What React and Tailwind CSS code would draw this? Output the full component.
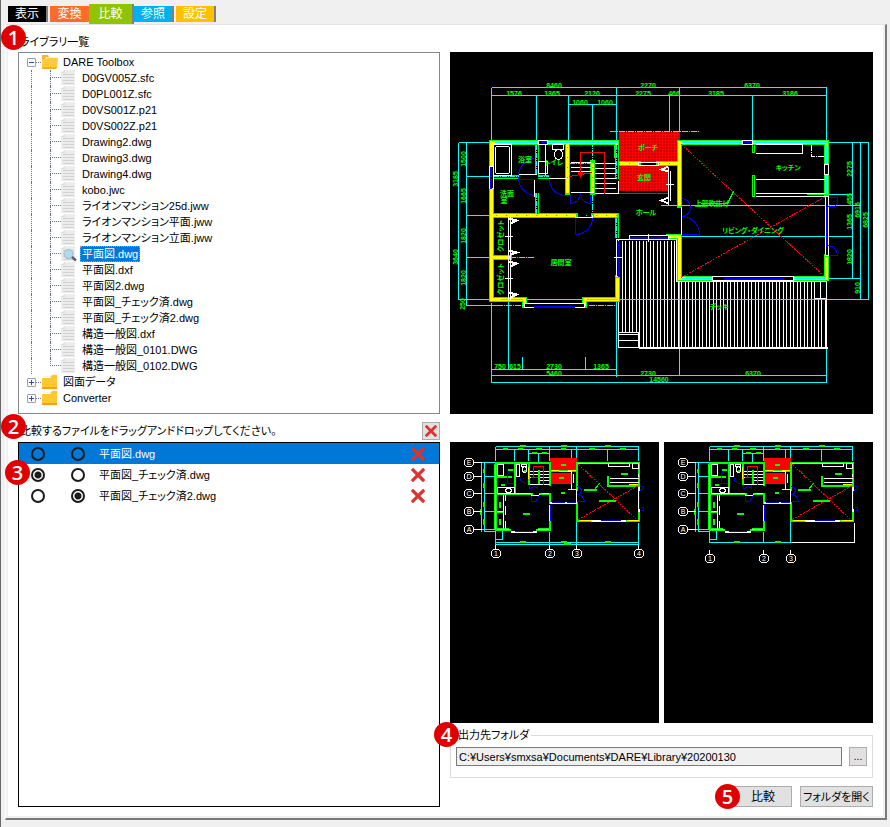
import { useState } from 'react';

const TABS = [
  { label: '表示', style: 'mr-[2px] mb-[2px] h-4 w-10 border-r-2 bg-black' },
  { label: '変換', style: 'mb-[2px] h-4 w-[39px] bg-[#ff6b2c]' },
  { label: '比較', style: 'h-5 w-[45px] border-r-2 bg-[#8fc400]' },
  { label: '参照', style: 'mr-[2px] mb-[2px] h-4 w-10 border-r-2 bg-[#00b0f0]' },
  { label: '設定', style: 'mb-[2px] h-4 w-10 border-r-2 bg-[#ffc000]' },
];

const FILES = [
  'D0GV005Z.sfc',
  'D0PL001Z.sfc',
  'D0VS001Z.p21',
  'D0VS002Z.p21',
  'Drawing2.dwg',
  'Drawing3.dwg',
  'Drawing4.dwg',
  'kobo.jwc',
  'ライオンマンション25d.jww',
  'ライオンマンション平面.jww',
  'ライオンマンション立面.jww',
  '平面図.dwg',
  '平面図.dxf',
  '平面図2.dwg',
  '平面図_チェック済.dwg',
  '平面図_チェック済2.dwg',
  '構造一般図.dxf',
  '構造一般図_0101.DWG',
  '構造一般図_0102.DWG',
];

const TARGETS = ['平面図.dwg', '平面図_チェック済.dwg', '平面図_チェック済2.dwg'];

function Badge({ n, className }) {
  return (
    <span
      className={`absolute z-10 flex size-[25px] items-center justify-center rounded-full bg-[#e00000] font-['Open_Sans',sans-serif] text-[20px] leading-none font-semibold text-white ${className}`}
    >
      {n}
    </span>
  );
}

function FolderIcon({ open }) {
  return (
    <svg viewBox="0 0 17 16" className="h-4 w-[17px] shrink-0">
      {open ? (
        <>
          <path d="M1 3V1h6l1 2h7v4H1z" fill="#fbb03b" />
          <path d="M5 3h10v4H3z" fill="#fff3d0" />
          <path d="M1 5h4l2-1h10l-1 10H1z" fill="#ffc93c" />
          <path d="M1 13h14.500v2H1z" fill="#fbab30" />
        </>
      ) : (
        <>
          <path d="M2 2h8l2-2h3v3H2z" fill="#fff3d0" />
          <path d="M1 4h8l2-3h5v14H1z" fill="#ffc832" />
          <path d="M1 13h15v2H1z" fill="#ff9a26" />
        </>
      )}
    </svg>
  );
}

function FileIcon({ active }) {
  return (
    <svg viewBox="0 0 16 16" className="size-4 shrink-0">
      <path d="M4 0h10v15H0V3z" fill="#ececec" />
      <path d="M4 0v3H0z" fill="#dcdcdc" />
      <path d="M2 4.5h11M2 7.5h11M2 10.5h11M2 13.5h11" stroke="#d2d2d2" />
      {active && (
        <>
          <circle cx="7.5" cy="8" r="4.5" fill="#a9dcf7" stroke="#b4c0c8" strokeWidth="1.4" />
          <path d="M11 11l4 3.5" stroke="#5c6066" strokeWidth="2.4" />
        </>
      )}
    </svg>
  );
}

function Cross({ className }) {
  return (
    <svg viewBox="0 0 14 14" className={className}>
      <path d="M2 2l10 10M12 2L2 12" stroke="#d9342f" strokeWidth="3.2" strokeLinecap="square" fill="none" />
    </svg>
  );
}

function Toggle({ open, label }) {
  return (
    <button
      aria-label={label}
      className="flex size-[9px] shrink-0 items-center justify-center rounded-[1px] border border-gray-400 bg-gray-50"
    >
      <svg viewBox="0 0 7 7" className="size-[7px] shrink-0" shapeRendering="crispEdges">
        <path d={open ? 'M1 3.5h5' : 'M1 3.5h5M3.5 1v5'} stroke="#2a4fb0" />
      </svg>
    </button>
  );
}

function FolderRow({ name, open }) {
  return (
    <div className="flex h-4 items-center pl-2">
      <Toggle open={open} label={name} />
      <span className="w-[5px] border-b border-dotted border-gray-500" />
      <FolderIcon open={open} />
      <span className="ml-[5px]">{name}</span>
    </div>
  );
}

function FileRow({ name, last, active, onSelect }) {
  return (
    <li className="flex h-4 items-center pl-3">
      <span className="w-[19px] self-stretch border-l border-dotted border-gray-500" />
      <span className="flex w-[11px] flex-col self-stretch">
        <span className="h-2 border-b border-l border-dotted border-gray-500" />
        {!last && <span className="h-2 border-l border-dotted border-gray-500" />}
      </span>
      <FileIcon active={active} />
      <button
        onClick={onSelect}
        className={`ml-[3px] h-4 px-[2px] whitespace-nowrap ${
          active ? 'bg-[#0078d7] text-white outline-1 -outline-offset-1 outline-[#ff8728] outline-dotted' : ''
        }`}
      >
        {name}
      </button>
    </li>
  );
}

function Radio({ name, label, defaultChecked }) {
  return (
    <input
      type="radio"
      name={name}
      aria-label={label}
      defaultChecked={defaultChecked}
      className="size-[14px] shrink-0 appearance-none rounded-full border-2 border-[#1c1c1c] checked:bg-[radial-gradient(circle,#1c1c1c_3px,#fff_4px)]"
    />
  );
}

// [x, y, text]
const DIMS = [
  [554, 88, '8460'], [648, 88, '2270'], [752, 88, '6370'],
  [514, 96, '1576'], [552, 96, '1365'], [592, 96, '2120'], [643, 96, '2275'],
  [674, 96, '466'], [716, 96, '3185'], [790, 96, '3186'],
  [580, 105, '1060'], [605, 105, '1060'],
  [500, 369, '750'], [515, 369, '615'], [554, 369, '2730'], [601, 369, '1365'],
  [554, 376, '5460'], [648, 376, '2730'], [753, 376, '6370'], [659, 382, '14560'],
];

const SIDE_DIMS = [
  [456, 179, '3185'], [464, 159, '1500'], [464, 196, '1665'],
  [456, 257, '3640'], [464, 236, '1820'], [464, 278, '1820'], [463, 304, '250'],
  [850, 169, '2275'], [850, 199, '455'], [850, 222, '1365'], [850, 257, '1820'],
  [858, 210, '6916'], [866, 220, '6825'], [858, 288, '910'],
];

const WALLS =
  'M524 305V299H491V142H616V155M491 215H575M593 215H616M567 142V192M592 162V192M491 257H509' +
  'M584 305V299H617V277M618 163H638M658 163H679M679 205V142H826V194M668 236H679V278H712M793 278H826V256';

const THIN_WALLS = 'M493 176H518M537 176H548M536 144V174M536 192V213M616 144V178M616 217V237';

function FloorPlan() {
  const deck = Array.from({ length: 60 }, (_, i) => 618 + Math.round(i * 3.5));
  return (
    <svg
      viewBox="450 52 423 362"
      className="block h-auto w-full bg-black"
      shapeRendering="crispEdges"
      role="img"
      aria-label="平面図.dwg"
    >
      <defs>
        <pattern id="dots" width="3" height="3" patternUnits="userSpaceOnUse">
          <rect width="3" height="3" fill="#f00" />
          <rect width="1" height="1" fill="#400" />
        </pattern>
      </defs>
      <g transform="translate(.5 .5)" fill="none">
        {/* dimension lines */}
        <path
          d="M491 87H826M491 95H826M568 104H616M491 87V140M536 95V140M568 95V140M592 104V140M616 87V140M669 95V162M679 87V140M752 95V140M826 87V140
             M458 142V299M466 142V305M458 142H490M466 176H490M466 215H490M466 257H490M458 299H490M466 305H496
             M852 142V278M860 142V299M868 142V299M828 142H868M828 194H852M662 205H860M676 236H852M828 278H860M500 299H868
             M491 369H616M491 375H826M491 382H826M491 302V382M508 300V369M522 356V369M585 356V369M616 300V376M679 281V375M826 347V382"
          stroke="#0ff"
        />
        <path d="M592 140V214M509 257H533M609 131H698M496 305H524M588 305H616M568 163H592M594 193H616M660 205H680" stroke="#0ff" strokeDasharray="6 1 1 1" />
        {/* porch and entrance */}
        <path d="M618 131H679V161H618zM618 165H667V190H618z" fill="url(#dots)" />
        <path d="M618 193H668" stroke="#f00" />
        {/* deck */}
        {deck.map((x) => (
          <path key={x} d={`M${x} ${x < 677 ? 240 : 281}V${x < 638 ? 332 : 347}`} stroke="#fff" />
        ))}
        <path d="M618 299H826M679 281V347" stroke="#0ff" />
        <path d="M618 239H676V281H826M618 332H638V347H618zM618 334H638M618 340H638" stroke="#fff" />
        <path d="M638 347H827" stroke="#fff" strokeWidth="2" />
        <path d="M826 281V347" stroke="#fff" />
        <path d="M814 281H826V298H814z" fill="#000" stroke="#fff" />
        <path d="M820 281V298" stroke="#fff" />
        {/* walls */}
        <path d={WALLS} stroke="#0f0" strokeWidth="5" strokeLinecap="square" />
        <path d={WALLS} stroke="#ff0" strokeWidth="3" />
        <path d="M494 142H616M681 142H826M500 299H522M586 299H616M826 144V194M681 278H712M793 278H824" stroke="#0ff" />
        <path d="M616 215H494M618 163H638M658 163H676M567 146V190M592 166V190" stroke="#0f0" strokeDasharray="1 9" />
        <path d={THIN_WALLS} stroke="#0f0" strokeWidth="4" />
        <path d={THIN_WALLS} stroke="#000" strokeWidth="2" />
        <path d={THIN_WALLS} stroke="#0ff" strokeDasharray="5 1 1 1" />
        <path d="M752 144V152H754V144zM752 175V196H754V175zM806 194H826" stroke="#0f0" />
        {/* fixtures */}
        <path d="M493 144H511V175H493zM545 144V175M538 161H547V173H538zM552 144H563V149H552zM755 144H802V153H755M755 179H824M755 193H824M755 196H824M570 192H592M518 174H536M548 178H566" stroke="#fff" />
        <rect x="495" y="146" width="14" height="27" rx="2" stroke="#fff" />
        <ellipse cx="558" cy="154" rx="4" ry="5" stroke="#fff" />
        <path d="M811 144V156H825" stroke="#fff" strokeDasharray="6 1 1 1" />
        <path d="M570 162H590M570 167H590M570 171H590M594 163H615M594 168H615M594 173H615M594 178H615M594 183H615M594 188H615M594 193H618V180" stroke="#fff" />
        <path d="M569 176L592 172M580 176V152H604V193M578 172L580 176L582 172" stroke="#f00" />
        <path d="M508 216V299M510 216V299M504 236H512M504 278H512" stroke="#fff" />
        <path
          d="M508 218L516 220L510 223M508 250L516 252L510 254M508 261L516 263L510 266M508 292L516 294L510 297
             M668 166L661 169L668 171M668 197L661 200L668 203"
          stroke="#fff"
          strokeWidth="2"
        />
        <path d="M668 166V204M670 170V200M665 184H673" stroke="#fff" />
        {/* windows */}
        <path d="M538 140H547V144H538zM489 166H493V188H489zM524 303H584V307H524zM629 235H668V238H629zM742 140H752V144H742zM712 276H793V280H712zM824 164H828V174H824zM825 196H828V255H825zM616 239H618V276H616z" stroke="#fff" fill="#000" />
        <path d="M540 141H546M533 306H574M629 237H667M743 141H751M723 278H783M826 205V246M618 240V276M490 166V176M490 178V188" stroke="#00f" strokeWidth="2" />
        <path d="M613 257H622M648 233V241M638 162H658V165H638zM575 214V217H592V214M681 206V234M534 178V196M567 192V178" stroke="#fff" />
        {/* doors */}
        <path
          d="M534 158A18 18 0 0 0 518 174M518 178A18 18 0 0 0 534 195M518 179H534M549 179A16 16 0 0 0 566 195M570 194V203A10 10 0 0 0 580 194A10 10 0 0 0 590 203V194
             M575 217V234A17 17 0 0 0 592 217M681 198A9 9 0 0 1 681 216A18 18 0 0 1 699 234H681M828 197H837V203A8 8 0 0 1 828 206M828 245A10 10 0 0 1 837 255H828"
          stroke="#00f"
        />
        {/* open ceiling */}
        <path d="M681 144L825 277M681 277L825 196" stroke="#f00" strokeDasharray="2 1" />
        <path d="M733 191L727 203H700" stroke="#0f0" />
      </g>
      <g fill="#0f0" fontSize="7" textAnchor="middle" className="font-['Liberation_Sans','Noto_Sans_CJK_JP',sans-serif] font-bold">
        {DIMS.map(([x, y, t]) => (
          <text key={`${x}-${y}`} x={x} y={y}>{t}</text>
        ))}
        {SIDE_DIMS.map(([x, y, t]) => (
          <text key={`${x}-${y}`} transform={`translate(${x + 2} ${y}) rotate(-90)`}>{t}</text>
        ))}
        <text x="525" y="162">浴室</text>
        <text x="507" y="196">洗面</text>
        <text x="504" y="203">室</text>
        <text x="554" y="165">トイレ</text>
        <text x="648" y="150">ポーチ</text>
        <text x="644" y="180">玄関</text>
        <text x="646" y="215">ホール</text>
        <text x="788" y="170">キッチン</text>
        <text x="712" y="206">上部吹抜け</text>
        <text x="753" y="233">リビング・ダイニング</text>
        <text x="561" y="265">居間室</text>
        <text x="719" y="309">デッキ</text>
        <text transform="translate(503 236) rotate(-90)">クロゼット</text>
        <text transform="translate(503 279) rotate(-90)">クロゼット</text>
      </g>
    </svg>
  );
}

const MINI_WALLS =
  'M509 529H495V462H549V484M495 493H531M539 493H549V502M536 529H549V520M495 476H510M528 462V483M538 470V483M514 462V493' +
  'M549 470H576M576 489V462H638V520H625M590 520H576V502M607 476V485H638M495 511H502';

const GRID_ROWS = [[462, 'E'], [476, 'D'], [493, 'C'], [511, 'B'], [529, 'A']];

function MiniPlan({ revised, label }) {
  const axisY = revised ? 558 : 553;
  const columns = revised ? [[495, 1], [549, 2], [576, 3]] : [[495, 1], [549, 2], [576, 3], [638, 4]];
  return (
    <svg
      viewBox="450 442 209 281"
      className="block h-auto w-full bg-black"
      shapeRendering="crispEdges"
      role="img"
      aria-label={label}
    >
      <g transform="translate(.5 .5)" fill="none">
        <path
          d="M495 446H638M495 449H638M528 453H549M495 446V460M514 449V460M528 449V460M538 453V462M549 446V460M571 449V470M576 446V460M607 449V460M638 446V460
             M481 462V531M484 462V531M481 462H495M484 476H495M484 493H495M484 511H495M481 529H495M484 531H495
             M495 531V542M549 531V542M576 504V542M495 539H502V529"
          stroke="#0ff"
        />
        <path d={revised ? 'M495 542H577' : 'M495 542H638M495 544H638M495 542V546M549 542V546M576 542V546M638 522V546'} stroke="#0ff" />
        {revised && <path d="M577 542H640V522" stroke="#fff" />}
        <path d="M549 457H576V470H549zM549 472H570V483H549z" fill="#f00" />
        <path d={MINI_WALLS} stroke="#0f0" strokeWidth="2" strokeLinecap="square" />
        <path d="M496 462H548M577 462H637M639 463V520M494 463V528M496 494H530M540 494H548M577 464V488M577 504V518M496 528H508M537 528H548" stroke="#0f0" />
        <path d="M496 493H530M540 493H548M496 529H508M537 529H548M577 463H607M578 520H590M626 520H638M628 484H637M495 464V528M528 466V478M496 511H502M567 489H576M550 470H558M567 470H575" stroke="#ff0" />
        <path
          d="M497 464H503V475H497zM516 464H519V476H516zM521 464H526V466H521zM529 471H537M529 474H537M529 477H537M529 484H549M539 471H548M539 474H548M539 477H548M539 480H548
             M497 487H514V493H497zM503 494V528M505 494V500M505 505V514M505 520V528M608 463H629V466H608zM632 463H638V468H632zM609 478H638M609 482H638M558 471H571V488M573 473V482M576 489V502M531 493V495H539V493M638 473V476"
          stroke="#fff"
        />
        <ellipse cx="524" cy="469" rx="2" ry="3" stroke="#fff" />
        <ellipse cx="508" cy="490" rx="3" ry="2" stroke="#fff" />
        <path d="M533 477V466H543V484M530 477H537" stroke="#f00" />
        <path d="M510 531H536M590 520H625M549 502H576M549 504V520M638 486V511" stroke="#fff" strokeWidth="2" />
        <path
          d="M514 531H532M600 520H620M551 502H564M566 502H575M550 504V520M639 490V508M507 476V483H513M507 476C507 472 509 470 512 469M520 477V480L526 484M529 484V488L534 486L537 488V484
             M531 495V501H535L539 495M577 486C582 488 582 493 577 494M577 494C582 494 584 500 584 501H577M640 486H643V488L640 490M640 507H643V510H640"
          stroke="#00f"
        />
        <path d="M578 464L636 519M578 519L638 485" stroke="#f00" strokeDasharray="2 1" />
        <path d="M599 483L594 489" stroke="#0f0" />
        <path d="M583 489H596M598 500H615" stroke="#0f0" strokeWidth="2" />
        <path
          d="M519 445H525M560 445H566M604 445H610M502 448H507M517 448H522M535 448H541M560 448H565M588 448H594M619 448H625M531 452H536M541 452H546
             M507 469H512M523 470H525M500 484H504M560 464H565M558 477H563M560 492H564M620 473H627M522 513H529M499 501V507M499 518V524
             M483 468V472M483 482V487M483 501V506M483 518V524M480 508V514M519 541H525M560 541H566"
          stroke="#0f0"
          strokeWidth="2"
        />
        {!revised && <path d="M604 541H610M563 543H570" stroke="#0f0" strokeWidth="2" />}
        {/* grid axes */}
        {GRID_ROWS.map(([y]) => (
          <path key={y} d={`M473 ${y}H481M464 ${y}a4 4 0 1 0 9 0a4 4 0 1 0 -9 0`} stroke="#fff" />
        ))}
        {columns.map(([x]) => (
          <path key={x} d={`M${x} ${axisY - 9}V${axisY - 5}M${x - 4} ${axisY}a4 4 0 1 0 9 0a4 4 0 1 0 -9 0`} stroke="#fff" />
        ))}
      </g>
      <g fill="#fff" fontSize="7" textAnchor="middle" className="font-['Liberation_Sans',sans-serif]">
        {GRID_ROWS.map(([y, t]) => (
          <text key={t} x="469" y={y + 3}>{t}</text>
        ))}
        {columns.map(([x, t]) => (
          <text key={t} x={x + 1} y={axisY + 3}>{t}</text>
        ))}
      </g>
    </svg>
  );
}

export default function App() {
  const [selected, setSelected] = useState('平面図.dwg');

  return (
    <div className="flex min-h-screen flex-col border-l border-[#696969] bg-[#f0f0f0] pt-1 pr-[3px] pb-2 pl-1 font-['Liberation_Sans','Noto_Sans_CJK_JP',sans-serif] text-[11px] leading-4 text-black [font-feature-settings:'palt']">
      <nav className="flex h-5 items-end pl-[3px]" role="tablist">
        {TABS.map((tab) => (
          <button
            key={tab.label}
            role="tab"
            aria-selected={tab.label === '比較'}
            className={`border-r-[#808080] text-[12px] text-white ${tab.style}`}
          >
            {tab.label}
          </button>
        ))}
      </nav>

      <div className="flex flex-1 flex-col border-t border-r-2 border-b-2 border-l border-t-[#e3e3e3] border-r-[#7a7a7a] border-b-[#7a7a7a] border-l-white px-[2px] pb-[2px]">
        <main className="grid flex-1 grid-cols-[422fr_423fr] grid-rows-[27px_auto_28px_1fr] gap-x-[10px] bg-white pr-[10px] pb-[9px] pl-[10px]">
          <h2 className="relative col-span-2 flex items-center pt-[6px] pl-[2px]">
            <Badge n={1} className="top-0 -left-[17px]" />
            ライブラリ一覧
          </h2>

          <div className="border border-[#828790] pt-px">
            <FolderRow name="DARE Toolbox" open />
            <ul>
              {FILES.map((name, i) => (
                <FileRow
                  key={name}
                  name={name}
                  last={i === FILES.length - 1}
                  active={name === selected}
                  onSelect={() => setSelected(name)}
                />
              ))}
            </ul>
            <FolderRow name="図面データ" />
            <FolderRow name="Converter" />
          </div>
          <FloorPlan />

          <div className="relative flex items-center justify-between pt-[6px] pl-[2px]">
            <Badge n={2} className="top-0 -left-[17px]" />
            <h2>比較するファイルをドラッグアンドドロップしてください。</h2>
            <button aria-label="すべて削除" className="flex size-[18px] items-center justify-center border border-[#adadad] bg-[#e1e1e1]">
              <Cross className="size-3" />
            </button>
          </div>
          <div />

          <ul className="relative border border-black">
            <Badge n={3} className="top-[17px] -left-[14px]" />
            {TARGETS.map((name, i) => (
              <li
                key={name}
                className={`flex h-[21px] items-center pr-[14px] pl-3 ${i === 0 ? 'bg-[#0078d7] text-white' : ''}`}
              >
                <Radio name="before" label={`${name} 1`} defaultChecked={i === 1} />
                <span className="w-[26px]" />
                <Radio name="after" label={`${name} 2`} defaultChecked={i === 2} />
                <span className="ml-[14px] flex-1">{name}</span>
                <button aria-label={`${name} 削除`}>
                  <Cross className="size-[14px]" />
                </button>
              </li>
            ))}
          </ul>

          <div className="flex flex-col">
            <div className="grid grid-cols-2 gap-[5px]">
              <MiniPlan label="平面図_チェック済.dwg" />
              <MiniPlan label="平面図_チェック済2.dwg" revised />
            </div>
            <fieldset className="relative mt-1 border border-[#dcdcdc] px-[5px] pt-1 pb-[11px]">
              <Badge n={4} className="-top-[21px] -left-[17px]" />
              <legend className="px-[2px]">出力先フォルダ</legend>
              <div className="flex items-center gap-[7px]">
                <input
                  aria-label="出力先フォルダ"
                  readOnly
                  defaultValue="C:¥Users¥smxsa¥Documents¥DARE¥Library¥20200130"
                  className="h-[19px] min-w-0 flex-1 border border-[#7a7a7a] bg-[#f0f0f0] px-[2px]"
                />
                <button aria-label="参照" className="h-[19px] w-[18px] border border-[#adadad] bg-[#e1e1e1] text-[10px] leading-none">
                  ...
                </button>
              </div>
            </fieldset>
            <div className="mt-2 flex justify-end gap-2">
              <div className="relative">
                <Badge n={5} className="-top-[2px] -left-[19px]" />
                <button className="h-[21px] w-[58px] border border-[#adadad] bg-[#e1e1e1] text-[12px]">比較</button>
              </div>
              <button className="h-[21px] w-[73px] border border-[#adadad] bg-[#e1e1e1] whitespace-nowrap">
                フォルダを開く
              </button>
            </div>
          </div>
        </main>
      </div>
    </div>
  );
}
